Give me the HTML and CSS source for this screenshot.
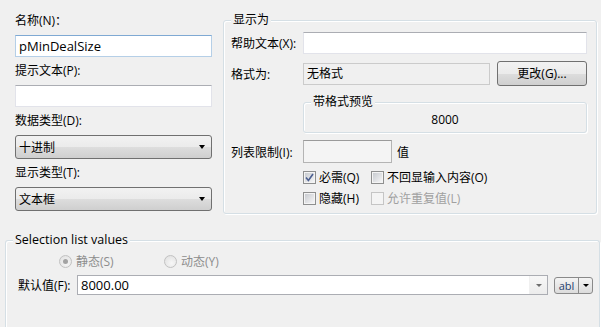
FILE: index.html
```html
<!DOCTYPE html>
<html lang="zh-CN">
<head>
  <meta charset="UTF-8">
  <title>参数属性</title>
  <link rel="stylesheet" href="styles.css">
</head>
<body>
  <div class="top">
    <!-- left column -->
    <div class="left-col">
      <div class="field-label">名称(N)：</div>
      <div class="textbox focused">pMinDealSize</div>
      <div class="field-label">提示文本(P):</div>
      <div class="textbox"></div>
      <div class="field-label">数据类型(D):</div>
      <div class="dropdown"><span>十进制</span><i class="arrow"></i></div>
      <div class="field-label">显示类型(T):</div>
      <div class="dropdown"><span>文本框</span><i class="arrow"></i></div>
    </div>

    <!-- 显示为 -->
    <div class="group display-group">
      <div class="legend">显示为</div>
      <div class="row row-help">
        <div class="row-label">帮助文本(X):</div>
        <div class="textbox grow"></div>
      </div>
      <div class="row row-format">
        <div class="row-label">格式为:</div>
        <div class="readonly-box">无格式</div>
        <div class="push-button">更改(G)...</div>
      </div>
      <div class="group preview-group">
        <div class="legend">带格式预览</div>
        <div class="preview-value">8000</div>
      </div>
      <div class="row row-limit">
        <div class="row-label">列表限制(I):</div>
        <div class="textbox limit-box"></div>
        <span class="unit">值</span>
      </div>
      <div class="row check-row first-checks">
        <label class="check wide"><span class="box checked"><svg width="9" height="9" viewBox="0 0 9 9"><path d="M1 4.5 L3.4 7.5 L8 1" fill="none" stroke="#4c5f90" stroke-width="1.6"/></svg></span>必需(Q)</label>
        <label class="check"><span class="box"></span>不回显输入内容(O)</label>
      </div>
      <div class="row check-row">
        <label class="check wide"><span class="box"></span>隐藏(H)</label>
        <label class="check disabled"><span class="box"></span>允许重复值(L)</label>
      </div>
    </div>
  </div>

  <!-- Selection list values -->
  <div class="group list-group">
    <div class="legend latin">Selection list values</div>
    <div class="radio-row">
      <label class="radio wide disabled"><span class="dot on"></span>静态(S)</label>
      <label class="radio disabled"><span class="dot"></span>动态(Y)</label>
    </div>
    <div class="default-row">
      <div class="default-label">默认值(F):</div>
      <div class="combo">
        <span class="combo-text">8000.00</span>
        <span class="combo-btn"><i class="arrow small"></i></span>
      </div>
      <div class="split-button">
        <span class="split-main">abl</span>
        <span class="split-drop"><i class="arrow"></i></span>
      </div>
    </div>
  </div>
</body>
</html>
```

FILE: styles.css
```css
body {
  margin: 0;
  width: 601px;
  height: 327px;
  overflow: hidden;
  background: #f0f0f0;
  font-family: "Open Sans", "Noto Sans CJK SC", sans-serif;
  font-size: 12px;
  color: #000;
}

.top {
  display: flex;
  align-items: flex-start;
}

/* left column */
.left-col {
  width: 197px;
  padding: 13px 0 0 15px;
}

.field-label {
  height: 16px;
  line-height: 16px;
  white-space: nowrap;
}

.textbox {
  box-sizing: border-box;
  height: 22px;
  line-height: 20px;
  padding-left: 3px;
  margin: 6px 0;
  background: #fff;
  border: 1px solid #e2e3ea;
  border-top-color: #abadb3;
}

.textbox.focused {
  border-color: #b5cfe7;
  border-top-color: #7fa9d3;
  font-size: 13px;
}

.dropdown {
  box-sizing: border-box;
  height: 24px;
  margin: 6px 0;
  padding: 0 3px;
  display: flex;
  align-items: center;
  justify-content: space-between;
  border: 1px solid #707070;
  border-radius: 3px;
  background: linear-gradient(#f2f2f2 0%, #ebebeb 50%, #dddddd 51%, #cfcfcf 100%);
}

.arrow {
  display: block;
  width: 0;
  height: 0;
  margin-right: 3px;
  border-left: 3.5px solid transparent;
  border-right: 3.5px solid transparent;
  border-top: 4px solid #000;
}

.arrow.small {
  margin: 0;
  border-left-width: 3px;
  border-right-width: 3px;
  border-top: 3px solid #6d6d6d;
}

/* group boxes */
.group {
  position: relative;
  box-sizing: border-box;
  border: 1px solid #d5dfe5;
  border-radius: 3px;
  box-shadow: inset 1px 1px 0 #fff, 1px 1px 0 #fff;
}

.legend {
  position: absolute;
  top: -8px;
  left: 7px;
  padding: 0 2px;
  line-height: 14px;
  background: #f0f0f0;
  white-space: nowrap;
}

.display-group {
  width: 374px;
  height: 194px;
  margin: 20px 0 0 11px;
  padding: 11px 9px 0 7px;
}

.row {
  display: flex;
  align-items: center;
}

.row-label {
  width: 72px;
  flex: none;
  white-space: nowrap;
}

.row .textbox {
  margin: 0;
}

.grow {
  flex: 1;
}

.row-format {
  margin-top: 7px;
  height: 25px;
}

.readonly-box {
  box-sizing: border-box;
  width: 187px;
  height: 22px;
  line-height: 20px;
  padding-left: 3px;
  border: 1px solid #cbcbcb;
  background: #f0f0f0;
}

.push-button {
  box-sizing: border-box;
  width: 90px;
  height: 25px;
  margin-left: 7px;
  line-height: 23px;
  text-align: center;
  border: 1px solid #707070;
  border-radius: 3px;
  background: linear-gradient(#f2f2f2 0%, #ebebeb 50%, #dddddd 51%, #cfcfcf 100%);
}

.preview-group {
  margin: 16px 0 0 72px;
  height: 31px;
  padding-top: 10px;
}

.preview-value {
  text-align: center;
  line-height: 14px;
}

.row-limit {
  margin-top: 7px;
  height: 23px;
}

.limit-box {
  width: 89px;
  height: 23px;
  background: #f4f4f4;
  border-color: #b4b4b4;
  border-top-color: #9a9a9a;
}

.unit {
  margin-left: 5px;
}

/* checkboxes */
.check-row {
  height: 16px;
  margin-top: 5px;
  padding-left: 72px;
}

.first-checks {
  margin-top: 6px;
}

.check {
  display: flex;
  align-items: center;
  gap: 3px;
  white-space: nowrap;
}

.check.wide {
  width: 68px;
}

.box {
  box-sizing: border-box;
  width: 13px;
  height: 13px;
  padding: 1px;
  border: 1px solid #8e8f8f;
  background: linear-gradient(135deg, #c8cbd0, #f5f5f6) content-box, #f4f4f4;
  display: flex;
  align-items: center;
  justify-content: center;
}

.box svg {
  display: block;
}

.check.disabled {
  color: #a0a0a0;
}

.check.disabled .box {
  border-color: #c5c5c5;
  background: #f4f4f4;
}

/* bottom group */
.list-group {
  width: 595px;
  height: 90px;
  margin: 23px 0 0 5px;
  padding: 12px 0 0 6px;
  border-bottom: none;
  border-radius: 3px 3px 0 0;
}

.legend.latin {
  top: -9px;
  font-size: 12.5px;
  line-height: 16px;
}

.radio-row {
  display: flex;
  height: 16px;
  align-items: center;
  padding-left: 47px;
}

.radio {
  display: flex;
  align-items: center;
  gap: 4px;
  white-space: nowrap;
}

.radio.wide {
  width: 105px;
}

.radio.disabled {
  color: #8d8d8d;
}

.dot {
  box-sizing: border-box;
  width: 13px;
  height: 13px;
  border-radius: 50%;
  border: 1px solid #c2c2c2;
  background: radial-gradient(circle at 60% 65%, #f7f7f7, #dedede);
  display: flex;
  align-items: center;
  justify-content: center;
}

.dot.on::after {
  content: '';
  width: 5px;
  height: 5px;
  border-radius: 50%;
  background: #a3a3a3;
}

.default-row {
  display: flex;
  align-items: center;
  height: 20px;
  margin-top: 6px;
  padding-left: 6px;
}

.default-label {
  width: 59px;
  white-space: nowrap;
}

.combo {
  box-sizing: border-box;
  width: 471px;
  height: 20px;
  display: flex;
  align-items: stretch;
  border: 1px solid #abadb3;
  background: #fff;
}

.combo-text {
  flex: 1;
  padding-left: 3px;
  line-height: 18px;
  font-size: 13px;
}

.combo-btn {
  width: 17px;
  display: flex;
  align-items: center;
  justify-content: center;
  background: linear-gradient(#f7f7f7, #ececec);
  border-left: 1px solid #f0f0f0;
}

.split-button {
  box-sizing: border-box;
  display: flex;
  width: 39px;
  height: 17px;
  margin-left: 6px;
  border: 1px solid #8a8a8a;
  border-radius: 3px;
  background: linear-gradient(#f4f4f4, #dcdcdc);
}

.split-main {
  width: 23px;
  text-align: center;
  font-size: 11px;
  line-height: 15px;
  color: #1f3f6e;
  border-right: 1px solid #8a8a8a;
}

.split-drop {
  flex: 1;
  display: flex;
  align-items: center;
  justify-content: center;
}

.split-drop .arrow {
  margin: 0;
  border-left-width: 3px;
  border-right-width: 3px;
  border-top-width: 3px;
}
```
